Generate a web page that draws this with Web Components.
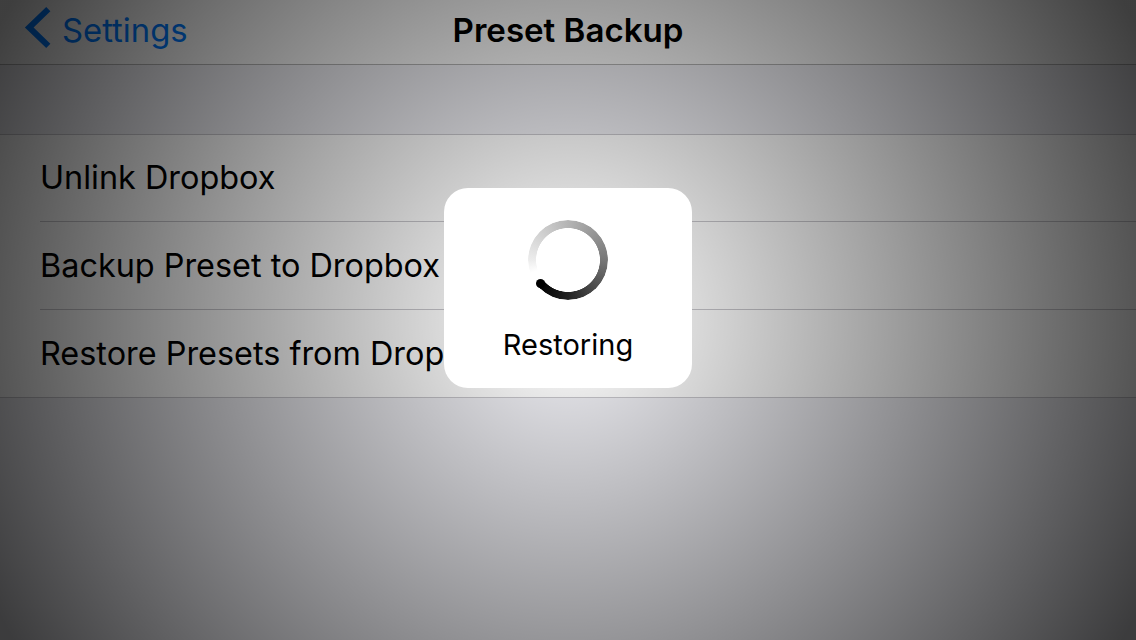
<!DOCTYPE html>
<html><head><meta charset="utf-8">
<style>
html,body{margin:0;padding:0;width:1136px;height:640px;overflow:hidden;background:#efeff4}
body{font-family:Inter,"Liberation Sans",sans-serif;color:#000}
</style></head>
<body>
<preset-screen>
  <nav-bar title="Preset Backup" back="Settings"></nav-bar>
  <table-row first>Unlink Dropbox</table-row>
  <table-row>Backup Preset to Dropbox</table-row>
  <table-row last>Restore Presets from Dropbox</table-row>
  <progress-hud label="Restoring"></progress-hud>
</preset-screen>
<script>
function def(name, css, html){
  customElements.define(name, class extends HTMLElement{
    connectedCallback(){
      if(this.shadowRoot) return;
      const r=this.attachShadow({mode:'open'});
      r.innerHTML='<style>'+css+'</style>'+(typeof html==='function'?html(this):html);
    }
  });
}
def('preset-screen',`
  :host{display:flex;flex-direction:column;width:1136px;height:640px;position:relative;overflow:hidden;background:#efeff4}
  .rows{display:flex;flex-direction:column;background:#fff;margin-top:69px}
  ::slotted(nav-bar){flex:none}
`,`<slot name="nav"></slot><div class="rows"><slot></slot></div><slot name="hud"></slot>`);
def('nav-bar',`
  :host{display:flex;align-items:center;justify-content:center;height:64px;position:relative;background:#f8f8f8;border-bottom:1px solid #b2b2b2}
  .back{position:absolute;left:24px;top:6px;display:flex;align-items:center;gap:11px;color:#007aff;font-size:32.8px;height:44px;font-weight:400}
  .back span{position:relative;top:2px}
  svg{display:block;flex:none}
  h1{margin:0;font-size:33.1px;font-weight:600;position:relative;top:-2px}
`,el=>`<div class="back"><svg width="27" height="44" viewBox="0 0 27 44"><path d="M24.3 3.2 L5.2 21.5 L24.3 39.8" fill="none" stroke="#007aff" stroke-width="6"/></svg><span>${el.getAttribute('back')}</span></div><h1>${el.getAttribute('title')}</h1>`);
def('table-row',`
  :host{display:block;height:88px;padding-left:40px;position:relative;font-size:32.4px;line-height:88px;white-space:nowrap}
  :host::after{content:"";position:absolute;left:40px;right:0;bottom:0;height:1px;background:#c8c7cc}
  :host([last])::after{left:0}
  :host([first])::before{content:"";position:absolute;left:0;right:0;top:0;height:1px;background:#c8c7cc}
`,`<slot></slot>`);
def('progress-hud',`
  :host{position:absolute;inset:0;display:flex;align-items:center;justify-content:center;background:radial-gradient(circle 640px at 568px 320px,rgba(0,0,0,0),rgba(0,0,0,.75))}
  .box{width:248px;height:200px;margin-top:-64px;background:#fff;border-radius:24px;display:flex;flex-direction:column;align-items:center;padding-top:32px;box-sizing:border-box}
  .wrap{position:relative;width:80px;height:80px}
  .spin{width:80px;height:80px;border-radius:50%;background:conic-gradient(from 229deg,#000 0deg,#fff 1deg,#fff 22deg,#ececec 41deg,#b4b4b4 131deg,#777 221deg,#222 311deg,#000 360deg);
    -webkit-mask:radial-gradient(circle closest-side,transparent 31.6px,#000 32.2px);mask:radial-gradient(circle closest-side,transparent 31.6px,#000 32.2px)}
  .cap{position:absolute;width:9px;height:9px;border-radius:50%;background:#000;left:8.3px;top:59.1px}
  .label{margin-top:27px;font-size:29px;line-height:36px;color:#000}
`,el=>`<div class="box"><div class="wrap"><div class="spin"></div><div class="cap"></div></div><div class="label">${el.getAttribute('label')}</div></div>`);
document.querySelector('nav-bar').slot='nav';
document.querySelector('progress-hud').slot='hud';
</script>
</body></html>
